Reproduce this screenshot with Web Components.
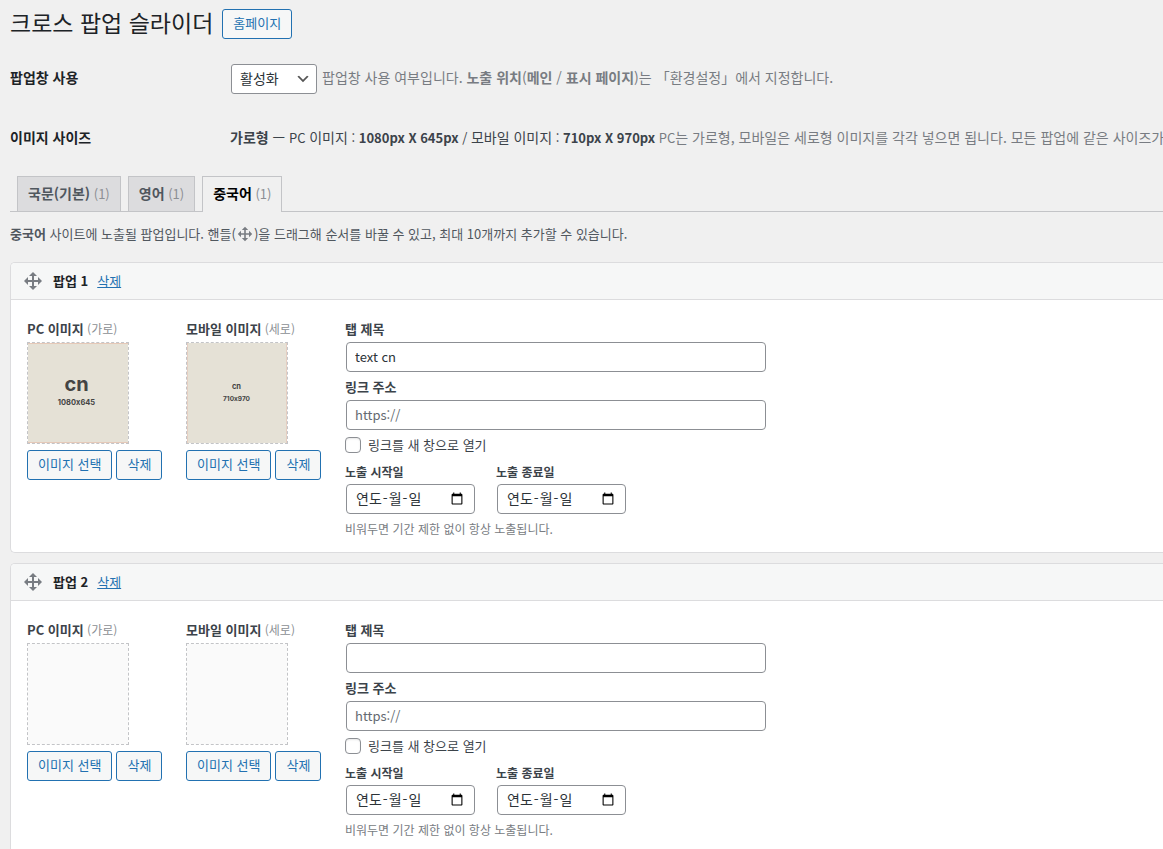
<!DOCTYPE html>
<html lang="ko">
<head>
<meta charset="utf-8">
<meta name="viewport" content="width=device-width, initial-scale=1">
<title>크로스 팝업 슬라이더</title>
<style>
html { background: #f0f0f0; overflow-x: clip; }
body {
  margin: 0;
  background: #f0f0f0;
  color: #3c434a;
  font: 13px/18px "Noto Sans CJK KR", "Noto Sans", sans-serif;
}
</style>
</head>
<body>
<popup-admin></popup-admin>

<script>
const define = (name, html, setup) => {
  const template = document.createElement('template');
  template.innerHTML = html;
  customElements.define(name, class extends HTMLElement {
    connectedCallback() {
      if (this.shadowRoot) return;
      const root = this.attachShadow({ mode: 'open' });
      root.append(template.content.cloneNode(true));
      if (setup) setup(this, root);
    }
  });
};

/* Four-way drag handle */
define('move-icon', `
<style>
  :host { display: inline-block; flex: none; width: 20px; height: 20px; color: #787c82; white-space: normal; }
  svg { display: block; width: 100%; height: 100%; fill: currentColor; }
</style>
<svg viewBox="0 0 20 20" aria-hidden="true"><path d="M19 10l-4 4v-3h-4v4h3l-4 4-4-4h3v-4H5v3l-4-4 4-4v3h4V5H6l4-4 4 4h-3v4h4V6z"/></svg>`);

define('wp-button', `
<style>
  :host { display: inline-block; }
  button {
    box-sizing: border-box; height: 30px; margin: 0; padding: 0 10px 2px;
    border: 1px solid #2271b1; border-radius: 3px; background: #f6f7f7; color: #2271b1;
    font: inherit; font-size: 13px; white-space: nowrap; cursor: pointer;
  }
</style>
<button type="button"><slot></slot></button>`);

define('wp-select', `
<style>
  :host { display: inline-grid; }
  select, svg { grid-area: 1 / 1; }
  select {
    appearance: none; box-sizing: border-box; height: 30px; margin: 0; padding: 0 24px 2px 8px;
    border: 1px solid #8c8f94; border-radius: 3px; background: #fff; color: #2c3338;
    font: inherit; font-size: 14px; width: 86px;
  }
  svg { width: 16px; height: 16px; place-self: center end; margin-right: 6px; pointer-events: none; }
</style>
<select aria-label="팝업창 사용"><option>활성화</option><option>비활성화</option></select>
<svg viewBox="0 0 20 20" aria-hidden="true"><path d="M5 6l5 5 5-5 2 1-7 7-7-7 2-1z" fill="#555"/></svg>`);

define('setting-row', `
<style>
  :host { display: flex; align-items: center; font-size: 14px; line-height: 20px; }
  .name { flex: 0 0 220px; padding-bottom: 4px; font-weight: 700; color: #1d2327; }
  .value { display: flex; align-items: center; gap: 5px; white-space: nowrap; }
</style>
<div class="name"><slot name="name"></slot></div>
<div class="value"><slot></slot></div>`);

define('lang-tab', `
<style>
  :host { display: block; }
  a {
    display: block; padding: 6px 10px 8px; border: 1px solid #c3c4c7; border-bottom: 0;
    background: #dcdcde; color: #50575e; text-decoration: none;
    font-size: 14px; line-height: 20px; font-weight: 700; white-space: nowrap;
  }
  span { font-size: 13px; line-height: 1; font-weight: 400; color: #8c8f94; }
  :host([active]) { margin-bottom: -1px; }
  :host([active]) a { padding-bottom: 9px; background: #f0f0f0; color: #000; }
</style>
<a href="#"><slot></slot><span></span></a>`, (host, root) => {
  root.querySelector('span').textContent = ' (' + host.getAttribute('count') + ')';
  if (host.hasAttribute('active')) root.querySelector('a').setAttribute('aria-current', 'page');
});

/* Square thumbnail with its label and two buttons */
define('image-picker', `
<style>
  :host { display: block; }
  .label { font-weight: 700; white-space: nowrap; }
  .label small { font-size: 12px; font-weight: 400; color: #8c8f94; }
  .thumb { box-sizing: border-box; width: 102px; height: 102px; margin: 4px 0 6px; border: 1px dashed #c3c4c7; background: #fafafa; background-clip: padding-box; }
  .thumb svg { display: block; width: 100%; height: 100%; }
  .buttons { display: flex; gap: 4px; }
  text { font-family: Inter, sans-serif; font-weight: 700; font-feature-settings: "calt" 0; fill: #444; text-anchor: middle; }
</style>
<div class="label"><slot></slot><small></small></div>
<div class="thumb"></div>
<div class="buttons"><wp-button>이미지 선택</wp-button><wp-button>삭제</wp-button></div>`, (host, root) => {
  root.querySelector('small').textContent = ' (' + host.getAttribute('shape') + ')';
  const art = {
    wide: `<svg viewBox="0 0 200 200" role="img"><rect width="200" height="200" fill="#e6c9b8"/><rect y="2" width="200" height="196" fill="#e5e1d6"/>
      <text x="97" y="96" font-size="40">cn</text><text x="97" y="124" font-size="15">1080x645</text></svg>`,
    tall: `<svg viewBox="0 0 200 200" role="img"><rect width="200" height="200" fill="#e6cfc2"/><rect x="2" width="196" height="200" fill="#e5e1d6"/>
      <text x="99" y="91" font-size="15">cn</text><text x="99" y="115" font-size="13">710x970</text></svg>`
  };
  root.querySelector('.thumb').innerHTML = art[host.getAttribute('art')] || '';
});

define('text-field', `
<style>
  :host { display: block; }
  label { display: block; margin-bottom: 4px; font-weight: 700; }
  input {
    display: block; box-sizing: border-box; width: calc(100% - 2px); height: 30px; margin: 0 1px; padding: 0 8px 2px;
    border: 1px solid #8c8f94; border-radius: 4px; background: #fff; color: #2c3338;
    font: inherit; font-size: 13px;
  }
  input::placeholder { color: #646970; opacity: 1; }
</style>
<label for="f"><slot></slot></label>
<input id="f" type="text">`, (host, root) => {
  const input = root.querySelector('input');
  input.value = host.getAttribute('value') || '';
  input.placeholder = host.getAttribute('placeholder') || '';
});

/* Date input with a Korean hint over the empty value */
define('date-field', `
<style>
  :host { display: block; }
  label { display: block; margin-bottom: 3px; font-size: 12px; font-weight: 700; }
  .box { display: grid; grid-template-columns: 129px; margin: 0 1px; }
  input, .hint { grid-area: 1 / 1; }
  input {
    box-sizing: border-box; width: 100%; min-width: 0; height: 30px; margin: 0; padding: 0 8px;
    border: 1px solid #8c8f94; border-radius: 4px; background: #fff; color: #2c3338;
    font: inherit; font-size: 14px;
  }
  input::-webkit-datetime-edit { min-width: 0; overflow: hidden; }
  input.empty::-webkit-datetime-edit { opacity: 0; }
  .hint { display: flex; gap: 1px; align-self: center; padding: 0 0 3px 10px; font-size: 14px; line-height: 20px; color: #2c3338; pointer-events: none; }
  input:not(.empty) + .hint { visibility: hidden; }
</style>
<label for="d"><slot></slot></label>
<div class="box">
  <input id="d" type="date" class="empty">
  <span class="hint" aria-hidden="true"><span>연도</span><span>-</span><span>월</span><span>-</span><span>일</span></span>
</div>`, (host, root) => {
  const input = root.querySelector('input');
  input.addEventListener('change', () => input.classList.toggle('empty', !input.value));
});

define('check-field', `
<style>
  :host { display: block; }
  label { display: flex; align-items: center; gap: 7px; }
  input { appearance: none; box-sizing: border-box; width: 16px; height: 16px; margin: 0; border: 1px solid #8c8f94; border-radius: 4px; background: #fff; box-shadow: inset 0 1px 2px rgba(0,0,0,.1); }
  input:checked { background: #2271b1; }
</style>
<label><input type="checkbox"><slot></slot></label>`);

define('popup-card', `
<style>
  :host { display: block; border: 1px solid #dcdcde; border-right: 0; border-radius: 5px 0 0 5px; background: #fff; overflow: hidden; }
  header { display: flex; align-items: center; height: 36px; padding: 0 12px; border-bottom: 1px solid #dcdcde; background: #f6f7f7; }
  h2 { margin: 0 9px 0 10px; font-size: 13px; line-height: 18px; font-weight: 700; color: #1d2327; }
  header a { color: #2271b1; }
  .body { display: flex; gap: 24px; padding: 20px 16px 14px; }
  image-picker { flex: 0 0 135px; min-width: 0; width: 135px; }
  .fields { flex: 0 1 422px; display: flex; flex-direction: column; gap: 6px; }
  .dates { display: flex; gap: 20px; margin-top: 3px; }
  .note { margin: 0; font-size: 12px; color: #787c82; }
</style>
<header><move-icon></move-icon><h2></h2><a href="#">삭제</a></header>
<div class="body">
  <image-picker class="wide" shape="가로">PC 이미지</image-picker>
  <image-picker class="tall" shape="세로">모바일 이미지</image-picker>
  <div class="fields">
    <text-field class="title">탭 제목</text-field>
    <text-field placeholder="https://">링크 주소</text-field>
    <check-field>링크를 새 창으로 열기</check-field>
    <div class="dates"><date-field>노출 시작일</date-field><date-field>노출 종료일</date-field></div>
    <p class="note">비워두면 기간 제한 없이 항상 노출됩니다.</p>
  </div>
</div>`, (host, root) => {
  root.querySelector('h2').textContent = '팝업 ' + host.getAttribute('number');
  root.querySelector('.title').shadowRoot.querySelector('input').value = host.getAttribute('tab-title') || '';
  if (host.hasAttribute('filled')) {
    for (const art of ['wide', 'tall']) {
      const old = root.querySelector('.' + art);
      const next = document.createElement('image-picker');
      next.setAttribute('shape', old.getAttribute('shape'));
      next.setAttribute('art', art);
      next.textContent = old.textContent;
      old.replaceWith(next);
    }
  }
});

define('popup-admin', `
<style>
  :host { display: block; padding: 9px 0 20px 10px; overflow: clip; }
  .top { display: flex; align-items: flex-start; gap: 9px; }
  h1 { margin: 0; font-size: 23px; line-height: 26px; font-weight: 400; color: #1d2327; white-space: nowrap; }
  .settings { display: grid; gap: 33px; padding: 25px 0 25px; }
  .settings wp-select { margin-left: 1px; }
  .desc { padding-bottom: 4px; }
  .desc, .muted { color: #787c82; }
  .size { padding-bottom: 4px; }
  .px { font-size: 13px; line-height: 1; }
  nav { display: flex; gap: 7px; padding-left: 7px; border-bottom: 1px solid #c3c4c7; }
  .intro { display: flex; align-items: center; margin: 13px 0 19px; color: #50575e; white-space: pre; }
  .intro move-icon { width: 16px; height: 16px; margin: 0 1px; }
  .list { display: grid; gap: 10px; }
</style>
<div class="top"><h1>크로스 팝업 슬라이더</h1><wp-button>홈페이지</wp-button></div>
<div class="settings">
  <setting-row><span slot="name">팝업창 사용</span><wp-select></wp-select><span class="desc">팝업창 사용 여부입니다. <b>노출 위치</b>(<b>메인</b> / <b>표시 페이지</b>)는 「환경설정」에서 지정합니다.</span></setting-row>
  <setting-row><span slot="name">이미지 사이즈</span><span class="size"><b>가로형</b> — <span class="px">PC </span>이미지<span class="px"> : <b>1080px X 645px</b> / </span>모바일 이미지<span class="px"> : <b>710px X 970px</b> </span><span class="muted"><span class="px">PC</span>는 가로형, 모바일은 세로형 이미지를 각각 넣으면 됩니다. 모든 팝업에 같은 사이즈가</span></span></setting-row>
</div>
<nav>
  <lang-tab count="1">국문(기본)</lang-tab>
  <lang-tab count="1">영어</lang-tab>
  <lang-tab count="1" active>중국어</lang-tab>
</nav>
<div class="intro"><b>중국어</b><span> 사이트에 노출될 팝업입니다. 핸들(</span><move-icon></move-icon><span>)을 드래그해 순서를 바꿀 수 있고, 최대 10개까지 추가할 수 있습니다.</span></div>
<div class="list">
  <popup-card number="1" tab-title="text cn" filled></popup-card>
  <popup-card number="2"></popup-card>
</div>`);
</script>
</body>
</html>
